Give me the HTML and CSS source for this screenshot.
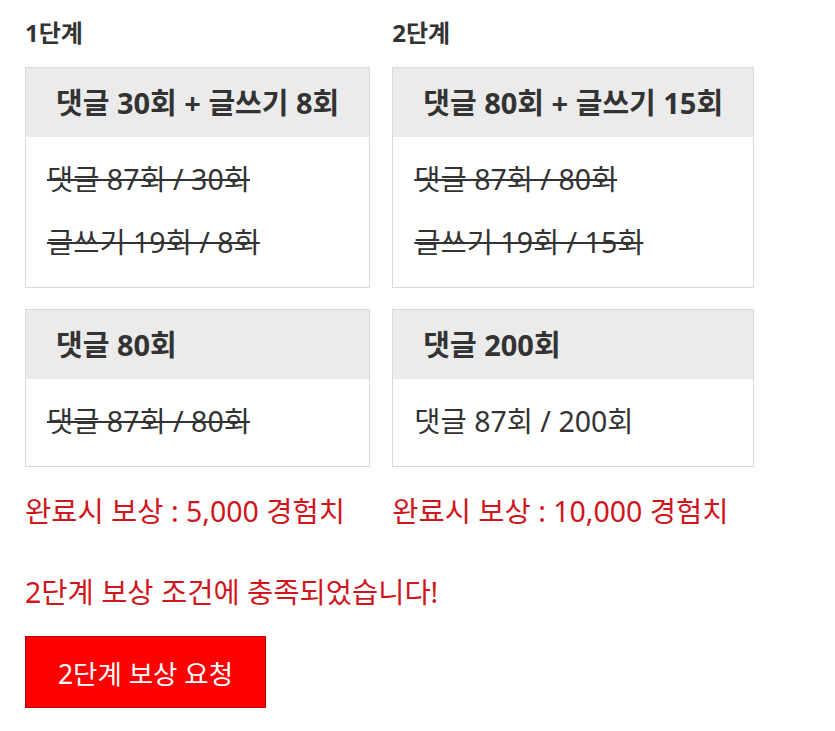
FILE: index.html
```html
<!DOCTYPE html>
<html>
<head>
  <title>보상 단계</title>
  <meta charset="utf-8">
  <link rel="stylesheet" href="styles.css">
</head>
<body>
  <div class="stages">
    <div class="stage">
      <h3>1단계</h3>
      <div class="mission">
        <div class="mission-title">댓글 30회 + 글쓰기 8회</div>
        <div class="mission-body">
          <p class="done">댓글 87회 / 30회</p>
          <p class="done">글쓰기 19회 / 8회</p>
        </div>
      </div>
      <div class="mission">
        <div class="mission-title">댓글 80회</div>
        <div class="mission-body">
          <p class="done">댓글 87회 / 80회</p>
        </div>
      </div>
      <div class="reward">완료시 보상 : 5,000 경험치</div>
    </div>

    <div class="stage">
      <h3>2단계</h3>
      <div class="mission">
        <div class="mission-title">댓글 80회 + 글쓰기 15회</div>
        <div class="mission-body">
          <p class="done">댓글 87회 / 80회</p>
          <p class="done">글쓰기 19회 / 15회</p>
        </div>
      </div>
      <div class="mission">
        <div class="mission-title">댓글 200회</div>
        <div class="mission-body">
          <p>댓글 87회 / 200회</p>
        </div>
      </div>
      <div class="reward">완료시 보상 : 10,000 경험치</div>
    </div>
  </div>

  <p class="notice">2단계 보상 조건에 충족되었습니다!</p>
  <button class="request-btn">2단계 보상 요청</button>
</body>
</html>
```

FILE: styles.css
```css
body {
  font-family: 'Noto Sans', 'Noto Sans CJK KR', sans-serif;
  margin: 0;
  padding: 16px 25px;
  color: #333;
  background: #fff;
}

.stages {
  display: flex;
  align-items: flex-start;
  gap: 22px;
}

.stage {
  display: flex;
  flex-direction: column;
}

.stage h3 {
  font-size: 24px;
  font-weight: bold;
  margin: 0 0 17px;
  line-height: 34px;
}

.mission {
  border: 1px solid #d9d9d9;
  margin-bottom: 21px;
}

.mission-title {
  background: #ebebeb;
  font-size: 29px;
  font-weight: bold;
  line-height: 69px;
  padding: 0 30px;
  white-space: nowrap;
}

.mission-body {
  display: flex;
  flex-direction: column;
  gap: 21px;
  padding: 21px 22px 24px 21px;
}

.mission-body p {
  margin: 0;
  font-size: 28.5px;
  line-height: 42px;
  white-space: nowrap;
}

.mission-body .done {
  text-decoration: line-through;
}

.reward {
  color: #d0161d;
  font-size: 28.5px;
  line-height: 46px;
  white-space: nowrap;
}

.notice {
  color: #d0161d;
  font-size: 28.5px;
  margin: 36px 0 22px;
  line-height: 44px;
}

.request-btn {
  background: #f00;
  color: #fff;
  border: 1px solid #b80000;
  font-family: inherit;
  font-size: 26.5px;
  width: 241px;
  height: 72px;
  padding: 0;
  cursor: pointer;
}
```
